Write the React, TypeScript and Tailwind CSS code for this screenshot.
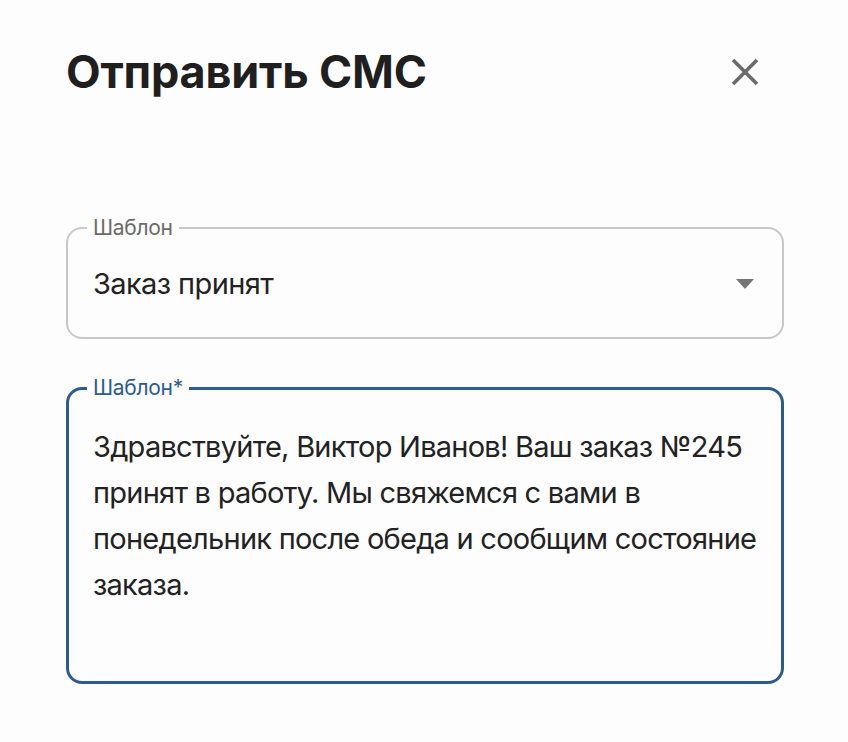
import { useState } from "react";

const smsText =
  "Здравствуйте, Виктор Иванов! Ваш заказ №245 принят в работу. Мы свяжемся с вами в понедельник после обеда и сообщим состояние заказа.";

export default function App() {
  const [template] = useState("Заказ принят");

  return (
    <div
      className="min-h-screen bg-[#fdfdfd] pl-[66px] pr-[64px] pt-[40px] text-[#222]"
      style={{ fontFamily: "Inter, 'Noto Sans', sans-serif" }}
    >
      {/* ЗАГОЛОВОК */}
      <div className="flex items-center justify-between">
        <h1 className="text-[45px] font-bold leading-[64px] tracking-[-0.2px] text-[#1f1f1f]">
          Отправить СМС
        </h1>
        <button className="mr-[19px] flex h-[40px] w-[40px] items-center justify-center text-[#6b6b6b]">
          <svg width="28" height="28" viewBox="0 0 28 28">
            <path d="M2 2 L26 26 M26 2 L2 26" stroke="currentColor" strokeWidth="3.6" />
          </svg>
        </button>
      </div>

      {/* ВЫБОР ШАБЛОНА */}
      <fieldset className="mt-[114px] h-[121px] rounded-[16px] border-2 border-[#c7c7c7] pl-[19px] pr-[28px]">
        <legend className="px-[6px] text-[21px] leading-[20px] tracking-[-0.3px] text-[#6b6b6b]">
          Шаблон
        </legend>
        <div className="flex h-[92px] items-center justify-between pl-[6px]">
          <span className="text-[29px] tracking-[-0.6px]">{template}</span>
          <svg width="18" height="10" viewBox="0 0 18 10">
            <path d="M0 0 H18 L9 10 Z" fill="#757575" />
          </svg>
        </div>
      </fieldset>

      {/* ТЕКСТ СООБЩЕНИЯ */}
      <fieldset className="mt-[39px] h-[306px] rounded-[16px] border-[3px] border-[#2c5b91] pl-[18px] pr-[8px]">
        <legend className="px-[6px] text-[21px] leading-[20px] tracking-[-0.3px] text-[#2c5b91]">
          Шаблон*
        </legend>
        <p className="mt-[26px] pl-[6px] text-[29px] leading-[46px] tracking-[-0.75px]">
          {smsText}
        </p>
      </fieldset>
    </div>
  );
}
